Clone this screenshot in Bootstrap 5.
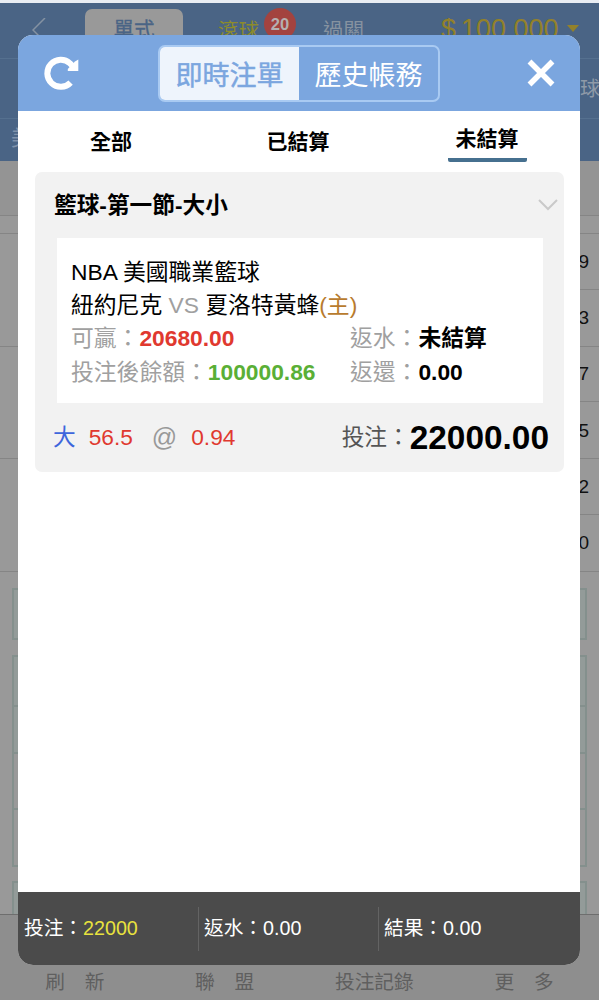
<!DOCTYPE html>
<html lang="zh-Hant">
<head>
<meta charset="utf-8">
<meta name="viewport" content="width=device-width, initial-scale=1">
<title>即時注單</title>
<link href="https://cdn.jsdelivr.net/npm/bootstrap@5.3.0/dist/css/bootstrap.min.css" rel="stylesheet">
<style>
body{font-family:"Liberation Sans","Noto Sans CJK TC",sans-serif;background:#999;width:599px;height:1000px;overflow:hidden;line-height:1;color:#000}
.page-top{height:161px;background:#4a6485;border-top:3px solid #e9edf3}
.top-nav{height:56px;border-bottom:1px solid #55708f;font-size:20.5px;color:#8692a0}
.mode-tab{width:98px;height:56px;margin-left:38px;margin-top:12px;border-radius:7px 7px 0 0;background:#999;color:#4a6485;padding-top:11px;-webkit-text-stroke:.3px #4a6485}
.live-tab{width:41px;margin-left:35px;color:#8c8b2c;padding-top:1px}
.parlay-tab{margin-left:64px;width:42px;padding-top:1px}
.count-dot{left:46px;top:-12px;width:32px;height:32px;border-radius:50%;background:#a3433f;color:#b5b0b0;font-size:16.5px;font-weight:700}
.balance{margin-left:76px;margin-top:-2px;font-size:27px;color:#93812a;white-space:nowrap}
.sport-row{height:60px;border-bottom:1px solid #55708f;color:#8f9aa8;font-size:20px;padding-left:580px;white-space:nowrap}
.league-row{height:41px;color:#8092ab;font-size:21px;padding:8px 0 0 11px}
.odds-head{height:55px;background:#949494;border-bottom:1px solid #858585}
.odds-gap{height:18px;border-bottom:1px solid #858585}
.odds-cell{height:55.8px;font-size:19px;padding-right:10px;color:#111}
.odds-pair{border-bottom:1px solid #858585}
.odds-cell.top-cell{border-bottom:1px solid #858585;margin-left:300px}
.bet-box{margin:0 12px;border:2px solid #84908d;background:#939b99}
.bottom-bar{height:90px;background:#8e8e8e;border-top:1px solid #6e6e6e;color:#5f5f5f;font-size:19.7px;padding-top:58px}
.sheet{left:18px;top:35px;width:562px;height:930px;border-radius:15px;overflow:hidden;background:#fff}
.sheet-head{height:76px;background:#7ba6df;color:#fff}
.seg{width:282px;height:57px;border:2px solid #a9caf2;border-radius:7px;overflow:hidden;font-size:27px;margin-left:78px;margin-top:1px}
.seg>div{padding-top:5px}
.seg-on{width:139px;background:#eef4fc;color:#7ba6df;-webkit-text-stroke:.5px #7ba6df}
.filters{height:61px;font-size:21px;font-weight:700}
.filters>div{height:61px}
.filter-on span{border-bottom:4px solid #46708f;height:34px;width:79px;border-radius:0 0 2px 2px}
.ticket{margin:0 16px 0 17px;height:300px;background:#f2f2f2;border-radius:7px}
.ticket-title{height:66px;font-size:22.7px;font-weight:700;padding:0 6px 0 19px}
.ticket-body{margin:0 21px 0 22px;height:165px;background:#fff;padding:17.5px 14px 0 14px;font-size:22.8px;line-height:33.4px;white-space:nowrap}
.lab{color:#a0a0a0}
.col-l{width:279px}
.ticket-foot{height:68px;padding:1px 15px 0 18px;font-size:22.7px;white-space:nowrap}
.red{color:#e0392f}
.sums{height:73px;background:#4b4b4b;color:#fff;font-size:19.7px}
.sums>div{width:180px;height:44px;padding-left:5px;border-left:1px solid #636363}
.sums>div:first-child{border-left-color:transparent}
</style>
<script src="https://cdn.jsdelivr.net/npm/bootstrap@5.3.0/dist/js/bootstrap.bundle.min.js"></script>
</head>
<body class="position-relative">
<main>
  <div class="page-top">
    <div class="top-nav d-flex align-items-center overflow-hidden">
      <svg width="15" height="26" viewBox="0 0 15 26" style="margin-left:32px" fill="none" stroke="#8592a2" stroke-width="1.5"><path d="M13 0 1 12 13 24"/></svg>
      <div class="mode-tab text-center">單式</div>
      <div class="live-tab position-relative">滾球<span class="count-dot position-absolute d-flex align-items-center justify-content-center">20</span></div>
      <div class="parlay-tab">過關</div>
      <div class="balance">$<span style="margin-left:5px">100,000</span></div>
      <svg width="12" height="8" viewBox="0 0 12 8" style="margin:-4px 0 0 8px"><path d="M0 0H12L6 7Z" fill="#93812a"/></svg>
    </div>
    <div class="sport-row d-flex align-items-center">球</div>
    <div class="league-row">美</div>
  </div>
  <div class="odds-head"></div>
  <div class="odds-gap"></div>
  <div class="odds-pair"><div class="odds-cell top-cell d-flex align-items-center justify-content-end">9</div><div class="odds-cell d-flex align-items-center justify-content-end">3</div></div>
  <div class="odds-pair"><div class="odds-cell top-cell d-flex align-items-center justify-content-end">7</div><div class="odds-cell d-flex align-items-center justify-content-end">5</div></div>
  <div class="odds-pair"><div class="odds-cell top-cell d-flex align-items-center justify-content-end">2</div><div class="odds-cell d-flex align-items-center justify-content-end">0</div></div>
  <div class="pt-3">
    <div class="bet-box" style="height:52px"></div>
    <div class="bet-box" style="height:52px;margin-top:15px"></div>
    <div class="bet-box border-top-0" style="height:47px"></div>
    <div class="bet-box border-top-0" style="height:56px;background:#999"></div>
    <div class="bet-box border-top-0" style="height:57px;background:#999"></div>
    <div class="bet-box border-bottom-0" style="height:33px;margin-top:14px"></div>
  </div>
  <div class="bottom-bar row g-0 text-center">
    <div class="col-3">刷　新</div><div class="col-3">聯　盟</div><div class="col-3">投注記錄</div><div class="col-3">更　多</div>
  </div>
</main>

<section class="sheet position-absolute d-flex flex-column">
  <header class="sheet-head d-flex align-items-center">
    <svg width="36" height="36" viewBox="0 0 36 36" style="margin-left:26px"><path d="M26.6 27.6A13.5 13.5 0 1 1 26 8.4L29.5 12" fill="none" stroke="#fff" stroke-width="6"/><path d="M34.3 4.5V16H23.8V14L31 6.5Z" fill="#fff"/></svg>
    <div class="seg d-flex">
      <div class="seg-on d-flex align-items-center justify-content-center">即時注單</div>
      <div class="flex-fill d-flex align-items-center justify-content-center">歷史帳務</div>
    </div>
    <svg width="28" height="28" viewBox="0 0 28 28" class="ms-auto" style="margin-right:25px" fill="none" stroke="#fff" stroke-width="5.5"><path d="M2.5 2.5 25.5 25.5M25.5 2.5 2.5 25.5"/></svg>
  </header>
  <nav class="filters d-flex">
    <div class="d-flex align-items-center justify-content-center" style="width:186px">全部</div>
    <div class="d-flex align-items-center justify-content-center" style="width:188px">已結算</div>
    <div class="filter-on text-center" style="width:188px;padding:17px 0 0 2px"><span class="d-inline-block">未結算</span></div>
  </nav>
  <article class="ticket">
    <div class="ticket-title d-flex align-items-center justify-content-between">籃球-第一節-大小
      <svg width="20" height="12" viewBox="0 0 20 12" fill="none" stroke="#c9c9c9" stroke-width="2"><path d="M1 1 10 10 19 1"/></svg>
    </div>
    <div class="ticket-body">
      <div>NBA 美國職業籃球</div>
      <div>紐約尼克 <span class="lab">VS</span> 夏洛特黃蜂<span style="color:#b87b2e">(主)</span></div>
      <div class="d-flex"><div class="col-l"><span class="lab">可贏：</span><b class="red">20680.00</b></div><div><span class="lab">返水：</span><b>未結算</b></div></div>
      <div class="d-flex"><div class="col-l"><span class="lab">投注後餘額：</span><b style="color:#5aaf36">100000.86</b></div><div><span class="lab">返還：</span><b>0.00</b></div></div>
    </div>
    <div class="ticket-foot d-flex align-items-center">
      <span style="color:#3e66dc">大</span>
      <span class="red" style="margin-left:13px">56.5</span>
      <span style="color:#999;font-size:25px;margin-left:19px">@</span>
      <span class="red" style="margin-left:14px">0.94</span>
      <span class="ms-auto" style="color:#555">投注：</span>
      <b style="font-size:33.4px">22000.00</b>
    </div>
  </article>
  <footer class="sums d-flex align-items-center mt-auto">
    <div class="d-flex align-items-center">投注：<span style="color:#e8e23e">22000</span></div>
    <div class="d-flex align-items-center">返水：0.00</div>
    <div class="d-flex align-items-center">結果：0.00</div>
  </footer>
</section>
</body>
</html>
